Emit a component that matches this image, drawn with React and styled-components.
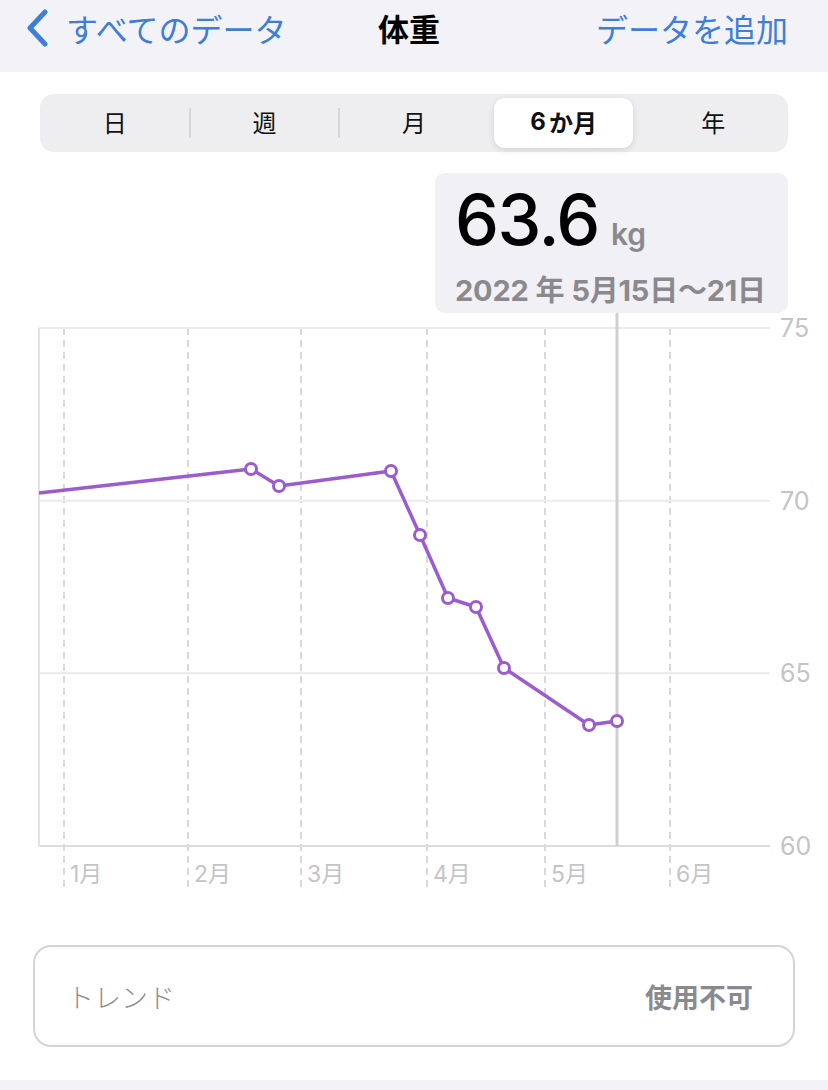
import React from "react";
import styled, { createGlobalStyle } from "styled-components";

const GlobalStyle = createGlobalStyle`
  html, body {
    margin: 0;
    padding: 0;
    background: #ffffff;
    font-family: Inter, "Noto Sans CJK JP", sans-serif;
  }
`;

const Page = styled.div`
  width: 828px;
  height: 1090px;
  overflow: hidden;
  display: flex;
  flex-direction: column;
  background: #ffffff;
`;

const NavBar = styled.div`
  height: 72px;
  background: #f2f2f7;
  display: grid;
  grid-template-columns: 1fr auto 1fr;
  align-items: center;
  padding: 0 40px 0 26px;
  box-sizing: border-box;
`;

const BackButton = styled.div`
  display: flex;
  align-items: center;
  gap: 18px;
  color: #3d7ed8;
  font-size: 32px;
  font-family: "Noto Sans CJK JP", sans-serif;
  margin-top: -17px;
`;

const Title = styled.div`
  font-size: 31px;
  font-weight: 700;
  color: #000;
  font-family: "Noto Sans CJK JP", sans-serif;
  margin-top: -17px;
  margin-left: 4px;
`;

const AddButton = styled.div`
  justify-self: end;
  color: #3d7ed8;
  font-size: 32px;
  font-family: "Noto Sans CJK JP", sans-serif;
  margin-top: -17px;
`;

const Segmented = styled.div`
  margin: 22px 40px 0 40px;
  height: 58px;
  border-radius: 14px;
  background: #eeeef0;
  display: grid;
  grid-template-columns: repeat(5, 1fr);
  padding: 4px 0;
  box-sizing: border-box;
`;

const Segment = styled.div`
  position: relative;
  display: flex;
  align-items: center;
  justify-content: center;
  border-radius: 11px;
  font-family: Inter, "Noto Sans CJK JP", sans-serif;
  font-size: 24px;
  font-weight: ${(p) => (p.$active ? 700 : 400)};
  color: #111;
  background: ${(p) => (p.$active ? "#ffffff" : "transparent")};
  box-shadow: ${(p) => (p.$active ? "0 2px 6px rgba(0,0,0,0.12)" : "none")};
  margin: 0 5px;
  padding-bottom: 3px;

  &::after {
    content: "";
    display: ${(p) => (p.$divider ? "block" : "none")};
    position: absolute;
    right: -6px;
    top: 10px;
    bottom: 10px;
    width: 2px;
    background: #d6d6d8;
  }
`;

const SixLabel = styled.span`
  margin-right: 3px;
`;

const CalloutRow = styled.div`
  display: flex;
  padding-left: 435px;
  margin-top: 21px;
`;

const Callout = styled.div`
  width: 353px;
  height: 140px;
  box-sizing: border-box;
  background: #f0f0f5;
  border-radius: 10px;
  padding: 4px 0 0 20px;
  display: flex;
  flex-direction: column;
`;

const Value = styled.div`
  display: flex;
  align-items: baseline;
  gap: 12px;
  height: 86px;
`;

const BigNumber = styled.span`
  font-family: Inter, sans-serif;
  font-size: 70px;
  font-weight: 500;
  color: #000;
  letter-spacing: -1.5px;
`;

const Unit = styled.span`
  font-family: Inter, sans-serif;
  font-size: 30px;
  font-weight: 600;
  color: #8a8a8e;
`;

const DateText = styled.div`
  font-family: Inter, "Noto Sans CJK JP", sans-serif;
  font-size: 29px;
  font-weight: 700;
  color: #8a8a8e;
  margin-top: 4px;
  letter-spacing: -0.2px;
  white-space: nowrap;
`;

const Gap = styled.span`
  display: inline-block;
  width: ${(p) => p.$w}px;
`;

const Chart = styled.svg`
  display: block;
  width: 828px;
  height: 590px;
`;

const TrendCard = styled.div`
  margin: 42px 33px 0 33px;
  height: 102px;
  border: 2px solid #d4d4d6;
  border-radius: 18px;
  box-sizing: border-box;
  display: flex;
  align-items: center;
  justify-content: space-between;
  padding: 0 40px 0 32px;
  font-family: "Noto Sans CJK JP", sans-serif;
`;

const TrendLabel = styled.span`
  font-size: 27px;
  font-weight: 300;
  color: #8e8e93;
`;

const TrendValue = styled.span`
  font-size: 27px;
  font-weight: 700;
  color: #8a8a8e;
`;

const Footer = styled.div`
  margin-top: auto;
  height: 10px;
  background: #f2f2f7;
`;

const segments = ["日", "週", "月", "6か月", "年"];

// chart coords (svg origin at page y=313)
const yFor = (kg) => 15 + ((75 - kg) / 15) * 518;
const gridRows = [75, 70, 65, 60];
const monthLines = [
  { x: 64, label: "1月" },
  { x: 188, label: "2月" },
  { x: 301, label: "3月" },
  { x: 427, label: "4月" },
  { x: 545, label: "5月" },
  { x: 670, label: "6月" },
];
const points = [
  [251, 156],
  [279, 173],
  [391, 158],
  [420, 222],
  [448, 285],
  [476, 294],
  [504, 355],
  [589, 412],
  [617, 408],
];

function WeightChart() {
  const line = [[39, 180], ...points].map((p) => p.join(",")).join(" ");
  return (
    <Chart viewBox="0 0 828 590">
      {monthLines.map((m) => (
        <line
          key={m.x}
          x1={m.x}
          x2={m.x}
          y1={15}
          y2={574}
          stroke="#d9d9dc"
          strokeWidth="2"
          strokeDasharray="7 5"
        />
      ))}
      {gridRows.map((kg) => (
        <g key={kg}>
          <line
            x1={39}
            x2={770}
            y1={yFor(kg)}
            y2={yFor(kg)}
            stroke={kg === 60 ? "#dcdcde" : "#ebebed"}
            strokeWidth="2"
          />
          <text
            x={780}
            y={yFor(kg) + 9}
            fontSize="25"
            fill="#c4c4c6"
            fontFamily="Inter, sans-serif"
          >
            {kg}
          </text>
        </g>
      ))}
      <line x1={39} x2={39} y1={15} y2={533} stroke="#e3e3e5" strokeWidth="2" />
      {monthLines.map((m) => (
        <text
          key={m.label}
          x={m.x + 6}
          y={569}
          fontSize="23"
          fill="#c4c4c6"
          fontFamily="Inter, 'Noto Sans CJK JP', sans-serif"
        >
          {m.label}
        </text>
      ))}
      <line x1={617} x2={617} y1={0} y2={533} stroke="#cfcfd1" strokeWidth="3" />
      <polyline
        points={line}
        fill="none"
        stroke="#9b5ccf"
        strokeWidth="3.5"
        strokeLinejoin="round"
      />
      {points.map(([x, y]) => (
        <circle key={x} cx={x} cy={y} r="5.5" fill="#fff" stroke="#9b5ccf" strokeWidth="3" />
      ))}
    </Chart>
  );
}

export default function App() {
  return (
    <Page>
      <GlobalStyle />
      <NavBar>
        <BackButton>
          <svg width="22" height="38" viewBox="0 0 22 38">
            <path
              d="M19 3 L4 19 L19 35"
              fill="none"
              stroke="#3d7ed8"
              strokeWidth="5"
              strokeLinecap="round"
              strokeLinejoin="round"
            />
          </svg>
          すべてのデータ
        </BackButton>
        <Title>体重</Title>
        <AddButton>データを追加</AddButton>
      </NavBar>

      <Segmented>
        {segments.map((s, i) => (
          <Segment key={s} $active={s === "6か月"} $divider={i < 2}>
            {s === "6か月" ? (
              <>
                <SixLabel>6</SixLabel>か月
              </>
            ) : (
              s
            )}
          </Segment>
        ))}
      </Segmented>

      <CalloutRow>
        <Callout>
          <Value>
            <BigNumber>63.6</BigNumber>
            <Unit>kg</Unit>
          </Value>
          <DateText>
            2022<Gap $w={7} />年<Gap $w={7} />5月15日〜21日
          </DateText>
        </Callout>
      </CalloutRow>

      <WeightChart />

      <TrendCard>
        <TrendLabel>トレンド</TrendLabel>
        <TrendValue>使用不可</TrendValue>
      </TrendCard>

      <Footer />
    </Page>
  );
}
